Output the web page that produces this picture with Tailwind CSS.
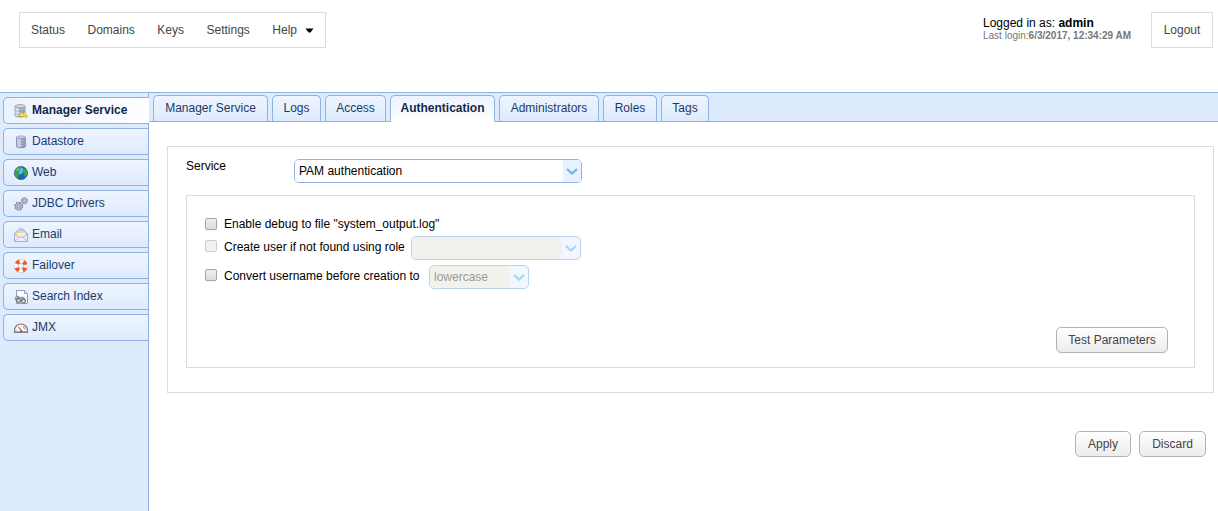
<!DOCTYPE html>
<html lang="en">
<head>
<meta charset="utf-8">
<meta name="viewport" content="width=device-width, initial-scale=1">
<title>Manager Service - Authentication</title>
<script src="https://cdn.jsdelivr.net/npm/@tailwindcss/browser@4"></script>
</head>
<body class="flex min-h-screen flex-col bg-white font-['Liberation_Sans',Arial,sans-serif] text-xs text-black">

<header class="flex h-[92px] items-start justify-between pt-3 pr-[5px] pl-[19px]">
  <nav aria-label="Main" class="flex h-9 min-w-[307px] items-center justify-between border border-[#dcdcde] px-[11px] text-[#444]">
    <a href="#status">Status</a>
    <a href="#domains">Domains</a>
    <a href="#keys">Keys</a>
    <a href="#settings">Settings</a>
    <button type="button" class="flex items-center gap-2">Help
      <svg class="h-[5px] w-[9px]" viewBox="0 0 9 5"><path d="M.5.5h8L5.500 4.500h-2z" fill="#000"/></svg>
    </button>
  </nav>
  <div class="flex gap-3">
    <div class="min-w-[156px] pt-1">
      <p class="leading-[14px]">Logged in as: <b>admin</b></p>
      <p class="text-[10px] leading-3 text-[#777]">Last login:<b>6/3/2017, 12:34:29 AM</b></p>
    </div>
    <a href="#logout" class="flex h-9 w-[62px] items-center justify-center border border-[#dcdcde] text-[#444]">Logout</a>
  </div>
</header>

<div class="flex grow border-t border-[#8db2e3]">
  <aside class="w-[149px] shrink-0 border-r border-[#8db2e3] bg-[#deebfd] pt-1 pl-[3px]">
    <nav aria-label="Services" class="flex flex-col gap-1 text-[#1c3a67]">
      <a href="#manager" aria-current="page" class="-mr-px flex h-[27px] items-center gap-1 rounded-l-[5px] border border-r-0 border-[#8db2e3] bg-linear-to-r from-[#ebf3ff] to-white pb-0.5 pl-2.5 font-bold text-[#15284b]">
        <svg class="mt-[3px] size-3.5" viewBox="0 0 14 14"><path d="M1 2.500v9C1 13.500 11 13.500 11 11.500v-9z" fill="#a4b2cc" stroke="#8c98b4" stroke-width=".8"/><path d="M1.500 3.500v8l3.500 1V4.500z" fill="#dde9f8"/><ellipse cx="6" cy="2.300" rx="5" ry="1.700" fill="#ded8d8" stroke="#938d98" stroke-width=".8"/><path d="M1.500 6.500c2 1.200 7 1.200 9 0M1.500 9.500c2 1.200 7 1.200 9 0" fill="none" stroke="#7d8ca8" stroke-width=".6"/><path d="M5 10.500L7.500 8l1.500 2 1-2.500 1.500 2 2 3-1.500 1.500-2-2-2 1.500L6.500 12 5 13z" fill="#f6d94a" stroke="#b8902a" stroke-width=".6"/><path d="M7 10l1-1M10.500 9l.5 1" stroke="#fffad0"/></svg>
        Manager Service</a>
      <a href="#datastore" class="flex h-[27px] items-center gap-1 rounded-l-[5px] border border-r-0 border-[#8db2e3] bg-linear-to-b from-[#eef4ff] to-[#deebfd] pb-0.5 pl-2.5">
        <svg class="mt-[3px] size-3.5" viewBox="0 0 14 14"><path d="M2.500 2.300v9.200c0 1.800 9 1.800 9 0V2.300z" fill="#8f8cb9" stroke="#7f7dac" stroke-width=".7"/><path d="M3 3v8.500c.8.600 2.500.9 4 .9V3.500z" fill="#c4c4de"/><ellipse cx="7" cy="2.200" rx="4.500" ry="1.300" fill="#cfcfe4" stroke="#8a88b0" stroke-width=".6"/><path d="M3 5c2 .8 6 .8 8 0M3 7.500c2 .8 6 .8 8 0M3 10c2 .8 6 .8 8 0" fill="none" stroke="#dcdcee" stroke-width=".6"/></svg>
        Datastore</a>
      <a href="#web" class="flex h-[27px] items-center gap-1 rounded-l-[5px] border border-r-0 border-[#8db2e3] bg-linear-to-b from-[#eef4ff] to-[#deebfd] pb-0.5 pl-2.5">
        <svg class="mt-[3px] size-3.5" viewBox="0 0 14 14"><circle cx="7" cy="7" r="6.600" fill="#1c62b5" stroke="#1d4d86" stroke-width=".6"/><path d="M6 1.500l3 .2.500 3L8 8 5 8.500 4 6z" fill="#55b9ee"/><path d="M.8 6.500C1.200 3.200 3.800 1 6.300.8L7 2.500 5 4.300l.5 1.200-2 1.800L5 9.500l-.8 3C2 11.500.7 9 .8 6.500zM9.500 3l2.200-.2c1.300 1.500 1.900 3.200 1.600 5.200L11.500 11 9.500 9.500 10 7.500 8.800 5.500z" fill="#3fa535"/><path d="M2 5C2.800 3 4 2 5.500 1.700L4 4z" fill="#9bdc74"/></svg>
        Web</a>
      <a href="#jdbc" class="flex h-[27px] items-center gap-1 rounded-l-[5px] border border-r-0 border-[#8db2e3] bg-linear-to-b from-[#eef4ff] to-[#deebfd] pb-0.5 pl-2.5">
        <svg class="mt-[3px] size-3.5" viewBox="0 0 14 14"><circle cx="4.700" cy="9.300" r="3.900" fill="#bdbedb" stroke="#8687ab" stroke-width="1.300" stroke-dasharray="1.700 1.363"/><circle cx="4.700" cy="9.300" r="3.400" fill="#b4b5d2" stroke="#9596b8" stroke-width=".8"/><circle cx="4.700" cy="9.300" r="1.200" fill="#f0f1fb" stroke="#7779a0" stroke-width=".7"/><circle cx="10.400" cy="3.700" r="3" fill="#c5c6df" stroke="#8687ab" stroke-width="1.200" stroke-dasharray="1.300 1.056"/><circle cx="10.400" cy="3.700" r="2.500" fill="#b9bad6" stroke="#9596b8" stroke-width=".7"/><circle cx="10.400" cy="3.700" r=".9" fill="#f5f6ff" stroke="#7779a0" stroke-width=".5"/></svg>
        JDBC Drivers</a>
      <a href="#email" class="flex h-[27px] items-center gap-1 rounded-l-[5px] border border-r-0 border-[#8db2e3] bg-linear-to-b from-[#eef4ff] to-[#deebfd] pb-0.5 pl-2.5">
        <svg class="mt-[3px] size-3.5" viewBox="0 0 14 14"><path d="M.5 5.500L5.500 1h3l5 4.500v8H.5z" fill="#cfcff2" stroke="#a3a0d4" stroke-width=".9"/><path d="M2.500 4.500h9v2.800L9 9.200H5L2.500 7.300z" fill="#fff0bd" stroke="#e0cd96" stroke-width=".5"/><path d="M1 6.500L5 9.300h4l4-2.800V13H1z" fill="#eeedff"/><path d="M.8 6.200L5 9.300h4l4.200-3.100M1.200 12.800L5 9.500M12.800 12.800L9 9.500" fill="none" stroke="#a9a6d8" stroke-width=".7"/></svg>
        Email</a>
      <a href="#failover" class="flex h-[27px] items-center gap-1 rounded-l-[5px] border border-r-0 border-[#8db2e3] bg-linear-to-b from-[#eef4ff] to-[#deebfd] pb-0.5 pl-2.5">
        <svg class="mt-[3px] size-3.5" viewBox="0 0 14 14"><circle cx="7" cy="7" r="4.700" fill="none" stroke="#c4bcbc" stroke-width="4.400"/><circle cx="7" cy="7" r="4.700" fill="none" stroke="#fff" stroke-width="3.600"/><circle cx="7" cy="7" r="4.700" fill="none" stroke="#f05a28" stroke-width="4" stroke-dasharray="3.700 3.683" transform="rotate(22 7 7)"/></svg>
        Failover</a>
      <a href="#search" class="flex h-[27px] items-center gap-1 rounded-l-[5px] border border-r-0 border-[#8db2e3] bg-linear-to-b from-[#eef4ff] to-[#deebfd] pb-0.5 pl-2.5">
        <svg class="mt-[3px] size-3.5" viewBox="0 0 14 14"><path d="M2.500.5h8l3 3v10h-11z" fill="#f7faff" stroke="#8596b8" stroke-width=".9"/><path d="M10.500.5v3h3" fill="#d6e0f2" stroke="#8596b8" stroke-width=".8"/><path d="M.5 8L2.500 5.800l2 .2 1.500 1.500L8 6.500l2 1 2 2.500-.5 2.500-2 .8L7.500 12 5 12.800 2 11.500z" fill="#858a8c"/><circle cx="4.600" cy="10.600" r="2" fill="#c8d4d6" stroke="#555b60" stroke-width=".8"/><circle cx="9.500" cy="11" r="2" fill="#bddcea" stroke="#555b60" stroke-width=".8"/><path d="M1.500 8l1.500-1M6.500 9l1.500-1" stroke="#e8eaea" stroke-width=".9"/></svg>
        Search Index</a>
      <a href="#jmx" class="flex h-[27px] items-center gap-1 rounded-l-[5px] border border-r-0 border-[#8db2e3] bg-linear-to-b from-[#eef4ff] to-[#deebfd] pb-0.5 pl-2.5">
        <svg class="mt-[3px] size-3.5" viewBox="0 0 14 14"><path d="M.6 11V9.500C.6 5.500 3.500 3 7 3s6.400 2.500 6.400 6.500V11z" fill="#fff" stroke="#777" stroke-width="1.100"/><path d="M2.300 8.800h1M7 4.500v1M11.700 8.800h-1" stroke="#999" stroke-width=".8"/><path d="M7.800 10L4.300 5.800M9.300 5.600l1.500 2" stroke="#ec5a32" stroke-width="1.200"/><path d="M0 11.300h14" stroke="#777" stroke-width="1.100"/><path d="M5.800 11a1.400 1.400 0 0 1 2.800 0z" fill="#666"/></svg>
        JMX</a>
    </nav>
  </aside>

  <main class="min-w-0 grow">
    <nav aria-label="Manager Service sections" class="flex h-[29px] gap-1 border-b border-[#8db2e3] bg-[#deebfd] pt-0.5 pl-1 text-[#1c3a67]">
      <a href="#t1" class="flex w-[115px] items-center justify-center rounded-t-[5px] border border-b-0 border-[#8db2e3] bg-linear-to-b from-[#eef4ff] to-[#deebfd] pb-0.5">Manager Service</a>
      <a href="#t2" class="flex w-[49px] items-center justify-center rounded-t-[5px] border border-b-0 border-[#8db2e3] bg-linear-to-b from-[#eef4ff] to-[#deebfd] pb-0.5">Logs</a>
      <a href="#t3" class="flex w-[61px] items-center justify-center rounded-t-[5px] border border-b-0 border-[#8db2e3] bg-linear-to-b from-[#eef4ff] to-[#deebfd] pb-0.5">Access</a>
      <a href="#t4" aria-current="page" class="-mb-px flex w-[105px] items-center justify-center rounded-t-[5px] border border-b-0 border-[#8db2e3] bg-linear-to-b from-[#ebf3ff] to-white pb-[3px] font-bold text-[#15284b]">Authentication</a>
      <a href="#t5" class="flex w-[100px] items-center justify-center rounded-t-[5px] border border-b-0 border-[#8db2e3] bg-linear-to-b from-[#eef4ff] to-[#deebfd] pb-0.5">Administrators</a>
      <a href="#t6" class="flex w-[54px] items-center justify-center rounded-t-[5px] border border-b-0 border-[#8db2e3] bg-linear-to-b from-[#eef4ff] to-[#deebfd] pb-0.5">Roles</a>
      <a href="#t7" class="flex w-12 items-center justify-center rounded-t-[5px] border border-b-0 border-[#8db2e3] bg-linear-to-b from-[#eef4ff] to-[#deebfd] pb-0.5">Tags</a>
    </nav>

    <form class="pt-6 pr-1 pl-[18px]">
      <section class="border border-[#dcdcde] px-[18px] pt-3 pb-6">
        <div class="flex items-start">
          <label for="service" class="w-[108px] leading-[14px]">Service</label>
          <div class="relative h-6 w-72 overflow-hidden rounded-[5px] border border-[#8db2e3]">
            <select id="service" class="size-full appearance-none bg-white pr-5 pl-1"><option>PAM authentication</option></select>
            <span class="pointer-events-none absolute inset-y-0 right-0 flex w-[18px] items-center justify-center bg-[#e8f1ff]"><svg class="h-[7px] w-3" viewBox="0 0 12 7"><path d="M1 1l5 4.500L11 1" fill="none" stroke="#68b8f0" stroke-width="2.200"/></svg></span>
          </div>
        </div>

        <div class="mt-3 border border-[#dcdcde] pt-5 pr-[26px] pb-3.5 pl-[18px]">
          <div class="flex h-4 items-center gap-[7px]">
            <input id="debug" type="checkbox" class="size-3 appearance-none rounded-[2px] border border-[#a6a6a6] bg-linear-to-b from-[#eee] to-[#dcdcdc] shadow-xs checked:bg-[#68b8f0]">
            <label for="debug">Enable debug to file "system_output.log"</label>
          </div>
          <div class="mt-1 flex h-6 items-start">
            <input id="create" type="checkbox" disabled class="mt-1 mr-[7px] size-3 appearance-none rounded-[2px] border border-[#d0d0d0] bg-[#f1f1f1]">
            <label for="create" class="mr-[3px] w-[184px] whitespace-nowrap leading-[22px]">Create user if not found using role</label>
            <div class="relative h-6 w-[170px] overflow-hidden rounded-[5px] border border-[#b9d2f2] bg-[#f2f7ff]">
              <select id="role" aria-label="Role" disabled class="h-full w-[150px] appearance-none rounded-[5px] bg-[#f1f2ec] pl-1 opacity-100"><option></option></select>
              <span class="pointer-events-none absolute inset-y-0 right-0 flex w-[18px] items-center justify-center"><svg class="h-[7px] w-3" viewBox="0 0 12 7"><path d="M1 1l5 4.500L11 1" fill="none" stroke="#a4d5f7" stroke-width="2.200"/></svg></span>
            </div>
          </div>
          <div class="mt-[5px] flex h-6 items-start">
            <input id="convert" type="checkbox" class="mt-1 mr-[7px] size-3 appearance-none rounded-[2px] border border-[#a6a6a6] bg-linear-to-b from-[#eee] to-[#dcdcdc] shadow-xs checked:bg-[#68b8f0]">
            <label for="convert" class="mr-[5px] w-[200px] whitespace-nowrap leading-[22px]">Convert username before creation to</label>
            <div class="relative h-6 w-[100px] overflow-hidden rounded-[5px] border border-[#b9d2f2] bg-[#f2f7ff]">
              <select id="case" aria-label="Case" disabled class="h-full w-[80px] appearance-none rounded-[5px] bg-[#f1f2ec] pl-1 text-[#999] opacity-100"><option>lowercase</option></select>
              <span class="pointer-events-none absolute inset-y-0 right-0 flex w-[18px] items-center justify-center"><svg class="h-[7px] w-3" viewBox="0 0 12 7"><path d="M1 1l5 4.500L11 1" fill="none" stroke="#a4d5f7" stroke-width="2.200"/></svg></span>
            </div>
          </div>
          <div class="mt-[38px] flex justify-end">
            <button type="button" class="h-[26px] w-28 rounded-[5px] border border-[#b4b4b4] bg-linear-to-b from-white to-[#ececec] text-[#444]">Test Parameters</button>
          </div>
        </div>
      </section>

      <div class="mt-[38px] flex justify-end gap-2 pr-2">
        <button type="submit" class="h-[26px] w-14 rounded-[5px] border border-[#b4b4b4] bg-linear-to-b from-white to-[#ececec] text-[#444]">Apply</button>
        <button type="reset" class="h-[26px] w-[67px] rounded-[5px] border border-[#b4b4b4] bg-linear-to-b from-white to-[#ececec] text-[#444]">Discard</button>
      </div>
    </form>
  </main>
</div>
</body>
</html>
